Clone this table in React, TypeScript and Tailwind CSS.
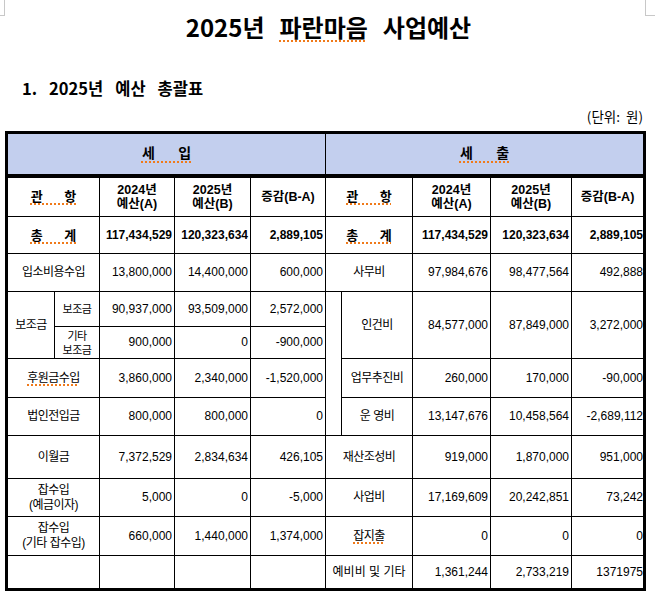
import React from "react"

const spell = "underline decoration-dotted decoration-[#f07a1a] decoration-[1.5px] underline-offset-[3px]"

function Cell({
  children,
  className = "",
  colSpan,
  rowSpan,
}: {
  children?: React.ReactNode
  className?: string
  colSpan?: number
  rowSpan?: number
}) {
  return (
    <td colSpan={colSpan} rowSpan={rowSpan} className={`border border-black p-0 text-center align-middle ${className}`}>
      {children}
    </td>
  )
}

function Num({ v, bold = false, last = false, rowSpan }: { v: string; bold?: boolean; last?: boolean; rowSpan?: number }) {
  return (
    <td
      rowSpan={rowSpan}
      className={`border border-black p-0 text-right align-middle whitespace-nowrap overflow-hidden ${last ? "pr-0" : "pr-[2px]"} ${bold ? "font-bold" : ""}`}
    >
      {v}
    </td>
  )
}

function Label({ children, spellcheck = false }: { children: React.ReactNode; spellcheck?: boolean }) {
  return <span className={`tracking-[-0.5px] ${spellcheck ? spell : ""}`}>{children}</span>
}

export default function App() {
  return (
    <div className="w-[655px] h-[606px] bg-white text-black font-['Liberation_Sans','Noto_Sans_CJK_KR',sans-serif] overflow-hidden">
      {/* page corner marks */}
      <div className="flex justify-between h-[16px]">
        <div className="w-[5px] h-[16px] border-r border-b border-[#c8c8c8]" />
        <div className="w-[10px] h-[16px] border-l border-b border-[#c8c8c8]" />
      </div>

      {/* title */}
      <h1 className="flex justify-center gap-[15px] pl-[2px] -mt-[3px] text-[24px] leading-[28px] font-bold font-['Noto_Sans_CJK_KR',sans-serif]">
        <span>2025년</span>
        <span className={spell}>파란마음</span>
        <span>사업예산</span>
      </h1>

      {/* subtitle */}
      <h2 className="flex gap-[12px] mt-[37px] pl-[22px] text-[16.5px] leading-[20px] font-bold font-['Noto_Sans_CJK_KR',sans-serif]">
        <span>1.</span>
        <span>2025년</span>
        <span>예산</span>
        <span>총괄표</span>
      </h2>

      <div className="mt-[10px] pr-[12px] text-right text-[13.5px] leading-[16px] font-['Noto_Sans_CJK_KR',sans-serif] whitespace-pre">(단위:  원)</div>

      <div className="pl-[5px] mt-[7px]">
        <table className="table-fixed border-collapse border-[3px] border-black w-[641px] text-[12px] leading-[13px]">
          <colgroup>
            <col className="w-[48px]" />
            <col className="w-[45px]" />
            <col className="w-[75px]" />
            <col className="w-[76px]" />
            <col className="w-[75px]" />
            <col className="w-[16px]" />
            <col className="w-[71px]" />
            <col className="w-[78px]" />
            <col className="w-[81px]" />
            <col className="w-[73px]" />
          </colgroup>
          <tbody>
            <tr className="h-[43px] bg-[#c3cfee]">
              <td colSpan={5} className="border border-black border-b-4 border-b-double p-0 text-center text-[14px] font-bold">
                <span className={`${spell} whitespace-pre`}>세      입</span>
              </td>
              <td colSpan={5} className="border border-black border-b-4 border-b-double p-0 text-center text-[14px] font-bold">
                <span className={`${spell} whitespace-pre`}>세      출</span>
              </td>
            </tr>

            <tr className="h-[41px] font-bold text-[12.5px] leading-[14px]">
              <Cell colSpan={2} className="text-[13px]">
                <span className={`${spell} whitespace-pre`}>관      항</span>
              </Cell>
              <Cell>2024년<br />예산(A)</Cell>
              <Cell>2025년<br />예산(B)</Cell>
              <Cell>증감(B-A)</Cell>
              <Cell colSpan={2} className="text-[13px]">
                <span className={`${spell} whitespace-pre`}>관      항</span>
              </Cell>
              <Cell>2024년<br />예산(A)</Cell>
              <Cell>2025년<br />예산(B)</Cell>
              <Cell>증감(B-A)</Cell>
            </tr>

            <tr className="h-[37px]">
              <Cell colSpan={2} className="font-bold text-[13px]">
                <span className={`${spell} whitespace-pre`}>총      계</span>
              </Cell>
              <Num v="117,434,529" bold />
              <Num v="120,323,634" bold />
              <Num v="2,889,105" bold />
              <Cell colSpan={2} className="font-bold text-[13px]">
                <span className={`${spell} whitespace-pre`}>총      계</span>
              </Cell>
              <Num v="117,434,529" bold />
              <Num v="120,323,634" bold />
              <Num v="2,889,105" bold last />
            </tr>

            <tr className="h-[38px]">
              <Cell colSpan={2}><Label>입소비용수입</Label></Cell>
              <Num v="13,800,000" />
              <Num v="14,400,000" />
              <Num v="600,000" />
              <Cell colSpan={2}><Label>사무비</Label></Cell>
              <Num v="97,984,676" />
              <Num v="98,477,564" />
              <Num v="492,888" last />
            </tr>

            <tr className="h-[35px]">
              <Cell rowSpan={2}><Label>보조금</Label></Cell>
              <Cell className="text-[11px]"><Label>보조금</Label></Cell>
              <Num v="90,937,000" />
              <Num v="93,509,000" />
              <Num v="2,572,000" />
              <Cell rowSpan={4} />
              <Cell rowSpan={2}><Label>인건비</Label></Cell>
              <Num v="84,577,000" rowSpan={2} />
              <Num v="87,849,000" rowSpan={2} />
              <Num v="3,272,000" rowSpan={2} last />
            </tr>

            <tr className="h-[32px]">
              <Cell className="text-[11px] leading-[14px]"><Label>기타<br />보조금</Label></Cell>
              <Num v="900,000" />
              <Num v="0" />
              <Num v="-900,000" />
            </tr>

            <tr className="h-[39px]">
              <Cell colSpan={2}><Label spellcheck>후원금수입</Label></Cell>
              <Num v="3,860,000" />
              <Num v="2,340,000" />
              <Num v="-1,520,000" />
              <Cell><Label>업무추진비</Label></Cell>
              <Num v="260,000" />
              <Num v="170,000" />
              <Num v="-90,000" last />
            </tr>

            <tr className="h-[38px]">
              <Cell colSpan={2}><Label>법인전입금</Label></Cell>
              <Num v="800,000" />
              <Num v="800,000" />
              <Num v="0" />
              <Cell><span className="whitespace-pre tracking-[-0.5px]">운 영비</span></Cell>
              <Num v="13,147,676" />
              <Num v="10,458,564" />
              <Num v="-2,689,112" last />
            </tr>

            <tr className="h-[43px]">
              <Cell colSpan={2}><Label>이월금</Label></Cell>
              <Num v="7,372,529" />
              <Num v="2,834,634" />
              <Num v="426,105" />
              <Cell colSpan={2}><Label>재산조성비</Label></Cell>
              <Num v="919,000" />
              <Num v="1,870,000" />
              <Num v="951,000" last />
            </tr>

            <tr className="h-[38px]">
              <Cell colSpan={2} className="leading-[15px]"><Label>잡수입<br />(예금이자)</Label></Cell>
              <Num v="5,000" />
              <Num v="0" />
              <Num v="-5,000" />
              <Cell colSpan={2}><Label>사업비</Label></Cell>
              <Num v="17,169,609" />
              <Num v="20,242,851" />
              <Num v="73,242" last />
            </tr>

            <tr className="h-[39px]">
              <Cell colSpan={2} className="leading-[15px]"><Label>잡수입<br />(기타 잡수입)</Label></Cell>
              <Num v="660,000" />
              <Num v="1,440,000" />
              <Num v="1,374,000" />
              <Cell colSpan={2}><Label spellcheck>잡지출</Label></Cell>
              <Num v="0" />
              <Num v="0" />
              <Num v="0" last />
            </tr>

            <tr className="h-[34px]">
              <Cell colSpan={2} />
              <Cell />
              <Cell />
              <Cell />
              <Cell colSpan={2}><span className="whitespace-pre">예비비 및 기타</span></Cell>
              <Num v="1,361,244" />
              <Num v="2,733,219" />
              <Num v="1371975" last />
            </tr>
          </tbody>
        </table>
      </div>
    </div>
  )
}
